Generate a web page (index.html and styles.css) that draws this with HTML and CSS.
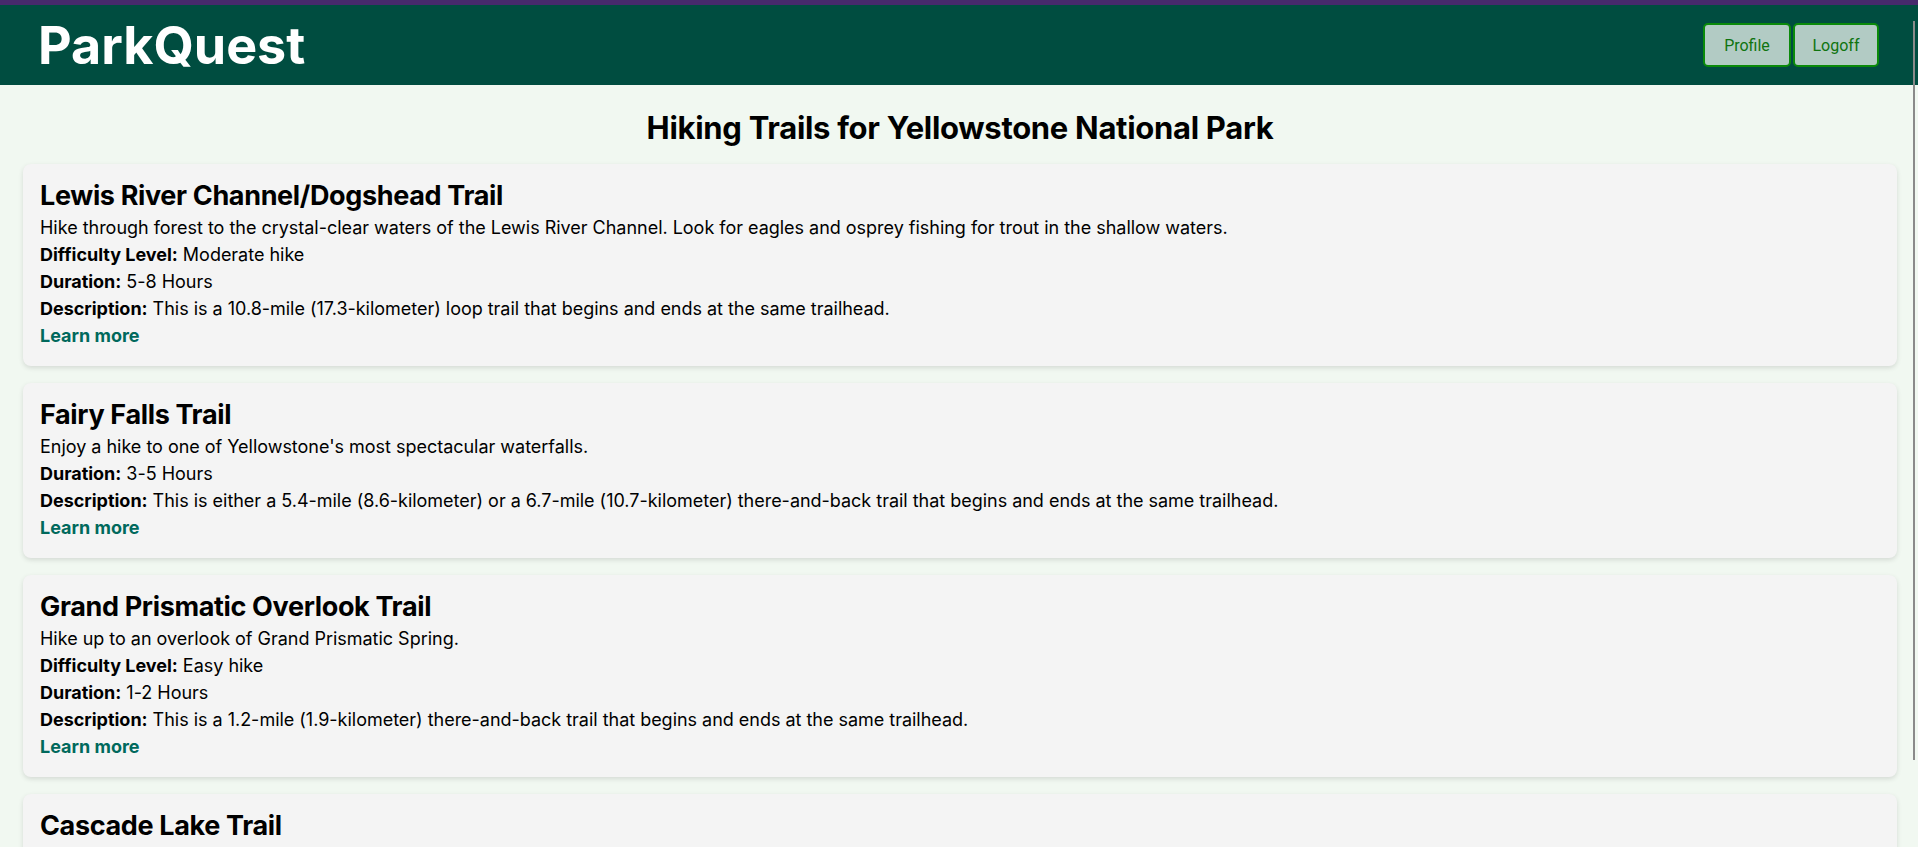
FILE: index.html
```html
<!DOCTYPE html>
<html lang="en">
<head>
<meta charset="utf-8">
<title>ParkQuest</title>
<link rel="stylesheet" href="styles.css">
</head>
<body>
<header class="topbar">
  <h1 class="brand">ParkQuest</h1>
  <nav class="actions">
    <button class="btn">Profile</button>
    <button class="btn">Logoff</button>
  </nav>
</header>
<main class="content">
  <h2 class="page-title">Hiking Trails for Yellowstone National Park</h2>
  <section class="trail">
    <h3 class="trail-name">Lewis River Channel/Dogshead Trail</h3>
    <p class="line">Hike through forest to the crystal-clear waters of the Lewis River Channel. Look for eagles and osprey fishing for trout in the shallow waters.</p>
    <p class="line"><strong>Difficulty Level:</strong> Moderate hike</p>
    <p class="line"><strong>Duration:</strong> 5-8 Hours</p>
    <p class="line"><strong>Description:</strong> This is a 10.8-mile (17.3-kilometer) loop trail that begins and ends at the same trailhead.</p>
    <a class="more" href="#">Learn more</a>
  </section>
  <section class="trail">
    <h3 class="trail-name">Fairy Falls Trail</h3>
    <p class="line">Enjoy a hike to one of Yellowstone's most spectacular waterfalls.</p>
    <p class="line"><strong>Duration:</strong> 3-5 Hours</p>
    <p class="line"><strong>Description:</strong> This is either a 5.4-mile (8.6-kilometer) or a 6.7-mile (10.7-kilometer) there-and-back trail that begins and ends at the same trailhead.</p>
    <a class="more" href="#">Learn more</a>
  </section>
  <section class="trail">
    <h3 class="trail-name">Grand Prismatic Overlook Trail</h3>
    <p class="line">Hike up to an overlook of Grand Prismatic Spring.</p>
    <p class="line"><strong>Difficulty Level:</strong> Easy hike</p>
    <p class="line"><strong>Duration:</strong> 1-2 Hours</p>
    <p class="line"><strong>Description:</strong> This is a 1.2-mile (1.9-kilometer) there-and-back trail that begins and ends at the same trailhead.</p>
    <a class="more" href="#">Learn more</a>
  </section>
  <section class="trail">
    <h3 class="trail-name">Cascade Lake Trail</h3>
    <p class="line">Hike through meadows and forest to Cascade Lake.</p>
    <p class="line"><strong>Difficulty Level:</strong> Easy hike</p>
    <p class="line"><strong>Duration:</strong> 2-3 Hours</p>
    <p class="line"><strong>Description:</strong> This is a 4.4-mile (7.1-kilometer) there-and-back trail that begins and ends at the same trailhead.</p>
    <a class="more" href="#">Learn more</a>
  </section>
</main>
<div class="scroll-thumb"></div>
</body>
</html>
```

FILE: styles.css
```css
html::-webkit-scrollbar { width: 0; height: 0; }
html { scrollbar-width: none; }

body {
  margin: 0;
  background: #f1f8f1;
  font-family: Inter, "Liberation Sans", sans-serif;
  color: #000;
  border-top: 5px solid #472a6c;
}

.topbar {
  background: #004d40;
  height: 80px;
  display: flex;
  align-items: center;
  justify-content: space-between;
  padding: 0 39px 0 38px;
}

.brand {
  margin: 0;
  color: #fff;
  font-size: 52px;
  font-weight: 700;
}

.actions {
  display: flex;
  gap: 2px;
}

.btn {
  height: 44px;
  padding: 0;
  background: #b2cbc4;
  border: 2px solid #0a8a0a;
  border-radius: 5px;
  color: #0f740f;
  font-family: Roboto, "Noto Sans", sans-serif;
  font-size: 16px;
}
.btn:first-child { width: 88px; }
.btn:last-child { width: 86px; }

.content {
  padding: 0 21px 20px 23px;
}

.page-title {
  margin: 0;
  padding: 21px 0 14px;
  text-align: center;
  font-size: 31px;
  font-weight: 700;
  letter-spacing: -0.3px;
  line-height: 44px;
}

.trail {
  background: #f4f4f4;
  border-radius: 8px;
  box-shadow: 0 2px 5px rgba(0, 0, 0, 0.12);
  padding: 15px 17px 17px;
  margin-bottom: 17px;
}

.trail-name {
  margin: 0 0 1px;
  font-size: 27px;
  font-weight: 700;
  letter-spacing: -0.35px;
  line-height: 34px;
}

.line {
  margin: 0;
  font-size: 18px;
  line-height: 27px;
  letter-spacing: -0.02px;
}

.more {
  display: block;
  font-size: 18px;
  line-height: 27px;
  font-weight: 700;
  color: #00695c;
  text-decoration: none;
}

.scroll-thumb {
  position: fixed;
  top: 21px;
  right: 3px;
  width: 2px;
  height: 739px;
  background: #8a8a8a;
}
```
